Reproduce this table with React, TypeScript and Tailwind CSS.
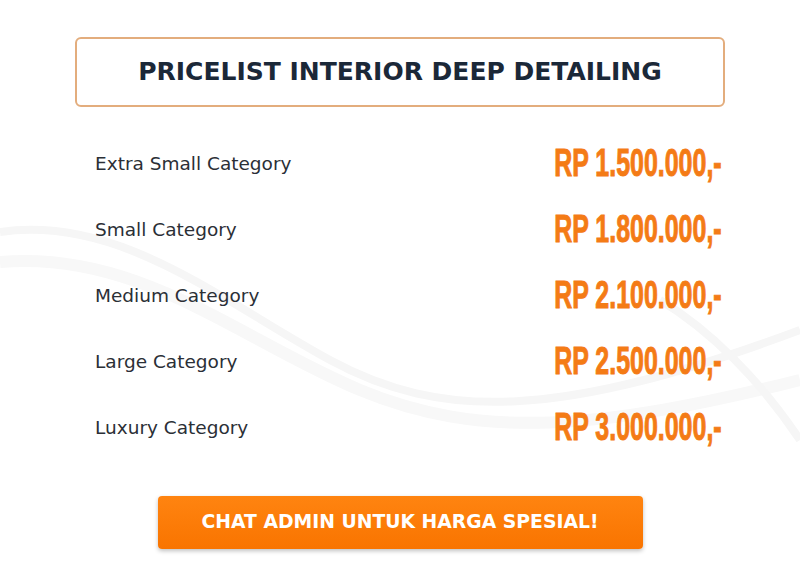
import React from 'react';

interface PriceRow {
  label: string;
  price: string;
}

const rows: PriceRow[] = [
  { label: 'Extra Small Category', price: 'RP 1.500.000,-' },
  { label: 'Small Category', price: 'RP 1.800.000,-' },
  { label: 'Medium Category', price: 'RP 2.100.000,-' },
  { label: 'Large Category', price: 'RP 2.500.000,-' },
  { label: 'Luxury Category', price: 'RP 3.000.000,-' }
];

const App: React.FC = () => {
  return (
    <div className="relative w-[800px] h-[588px] overflow-hidden bg-white font-['DejaVu_Sans',sans-serif]">
      {/* faint background waves */}
      <svg className="absolute inset-0 pointer-events-none" width="800" height="588" viewBox="0 0 800 588">
        <path d="M0 232 C120 215 220 300 330 360 C440 420 560 420 800 330" fill="none" stroke="#f6f6f6" strokeWidth="8" />
        <path d="M0 262 C140 250 240 340 360 390 C480 440 600 430 800 380" fill="none" stroke="#f8f8f8" strokeWidth="12" />
        <path d="M660 300 C710 330 760 380 800 440" fill="none" stroke="#f6f6f6" strokeWidth="8" />
      </svg>

      <div className="relative mx-auto w-[650px] pt-[37px]">
        {/* Heading box */}
        <div className="h-[70px] flex items-center justify-center rounded-md border-2 border-[#e3ad7d] bg-white">
          <h1 className="text-[25px] font-bold text-[#1b2838]">PRICELIST INTERIOR DEEP DETAILING</h1>
        </div>

        {/* Price rows */}
        <div className="mt-[22px] flex flex-col">
          {rows.map(row => (
            <div key={row.label} className="h-[66px] flex items-center justify-between pl-5 pr-[3px]">
              <span className="mt-1 text-[18.5px] text-[#2b2f36]">{row.label}</span>
              <span className="inline-block origin-right scale-x-[0.64] font-['Liberation_Sans_Narrow','Liberation_Sans',sans-serif] font-bold text-[39px] leading-none text-[#f47b16] [-webkit-text-stroke:1px_#f47b16]">
                {row.price}
              </span>
            </div>
          ))}
        </div>

        {/* CTA */}
        <div className="mt-[37px] flex justify-center">
          <button className="w-[485px] h-[53px] rounded-[4px] bg-gradient-to-b from-[#ff8410] to-[#f97400] shadow-[0_2px_4px_rgba(0,0,0,0.25)] text-white font-bold text-[18.8px]">
            CHAT ADMIN UNTUK HARGA SPESIAL!
          </button>
        </div>
      </div>
    </div>
  );
};

export default App;
